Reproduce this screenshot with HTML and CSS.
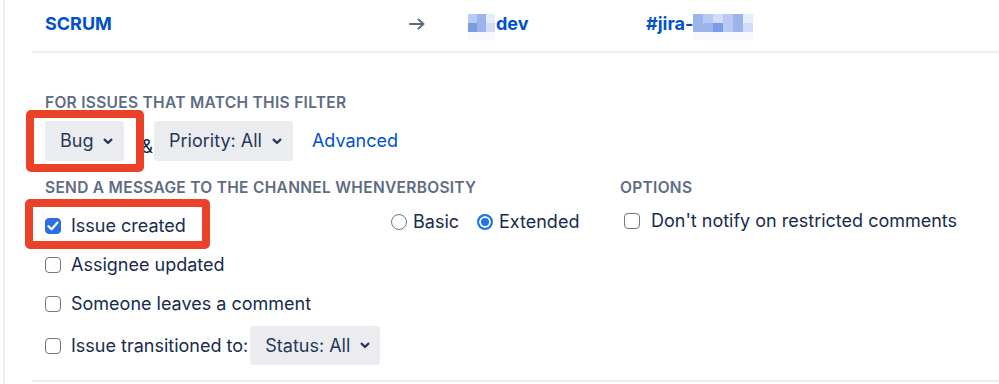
FILE: index.html
```html
<!DOCTYPE html>
<html lang="en">
<head>
<meta charset="utf-8">
<title>Jira subscription</title>
<link rel="stylesheet" href="styles.css">
</head>
<body>
<div class="page">
  <div class="inner">
    <div class="toprow">
      <a class="proj">SCRUM</a>
      <span class="arrow"><svg width="16" height="12" viewBox="0 0 16 12"><path d="M1 6H14.5M9.5 1.5L14.5 6L9.5 10.5" fill="none" stroke="currentColor" stroke-width="2" stroke-linecap="round" stroke-linejoin="round"/></svg></span>
      <span class="target">
        <span class="blur blur-dev">
          <i class="a3"></i><i class="a4"></i><i class="a1"></i>
          <i class="a5"></i><i class="a4"></i><i class="a2"></i>
          <i class="a0"></i><i class="a0"></i><i class="a0"></i>
        </span>
        <span class="lnk">dev</span>
      </span>
      <span class="target">
        <span class="lnk">#jira-</span>
        <span class="blur blur-jira">
          <i class="a4"></i><i class="a3"></i><i class="a2"></i><i class="a3"></i><i class="a4"></i><i class="a1"></i>
          <i class="a4"></i><i class="a4"></i><i class="a5"></i><i class="a3"></i><i class="a4"></i><i class="a2"></i>
          <i class="a0"></i><i class="a0"></i><i class="a0"></i><i class="a0"></i><i class="a0"></i><i class="a0"></i>
        </span>
      </span>
    </div>

    <div class="section">
      <div class="label">FOR ISSUES THAT MATCH THIS FILTER</div>
      <div class="filters">
        <button class="dd">Bug <svg class="chev" width="10" height="7" viewBox="0 0 10 7"><path d="M1.6 1.6L5 5L8.4 1.6" fill="none" stroke="currentColor" stroke-width="2.2" stroke-linecap="round" stroke-linejoin="round"/></svg></button>
        <span class="amp">&amp;</span>
        <button class="dd">Priority: All <svg class="chev" width="10" height="7" viewBox="0 0 10 7"><path d="M1.6 1.6L5 5L8.4 1.6" fill="none" stroke="currentColor" stroke-width="2.2" stroke-linecap="round" stroke-linejoin="round"/></svg></button>
        <a class="adv">Advanced</a>
      </div>

      <div class="grid">
        <div class="label span2">SEND A MESSAGE TO THE CHANNEL WHEN<span>VERBOSITY</span></div>
        <div class="label">OPTIONS</div>

        <div class="events">
          <label class="ev"><span class="cb on"><svg width="12" height="10" viewBox="0 0 12 10"><path d="M1.5 5.2L4.6 8.2L10.5 1.6" fill="none" stroke="#fff" stroke-width="2.2" stroke-linecap="round" stroke-linejoin="round"/></svg></span>Issue created</label>
          <label class="ev"><span class="cb"></span>Assignee updated</label>
          <label class="ev"><span class="cb"></span>Someone leaves a comment</label>
          <label class="ev ev-last"><span class="cb"></span>Issue transitioned to:<button class="dd status">Status: All <svg class="chev" width="10" height="7" viewBox="0 0 10 7"><path d="M1.6 1.6L5 5L8.4 1.6" fill="none" stroke="currentColor" stroke-width="2.2" stroke-linecap="round" stroke-linejoin="round"/></svg></button></label>
        </div>

        <div class="radios">
          <label class="rl"><span class="rd"></span>Basic</label>
          <label class="rl rl-gap"><span class="rd on"></span>Extended</label>
        </div>

        <div class="opts">
          <label class="ev-opt"><span class="cb"></span>Don't notify on restricted comments</label>
        </div>
      </div>
    </div>
  </div>

  <div class="mark mark-bug"></div>
  <div class="mark mark-issue"></div>
</div>
</body>
</html>
```

FILE: styles.css
```css
* { box-sizing: border-box; }
html, body { margin: 0; padding: 0; background: #fff; }
body {
  font-family: Inter, "Noto Sans", sans-serif;
  font-size: 18px;
  color: #172b4d;
}
.page {
  position: relative;
  margin-left: 3px;
  border-left: 2px solid #eceef2;
  min-height: 384px;
}
.inner { margin-left: 27px; }

/* top row */
.toprow {
  display: grid;
  grid-template-columns: 364px 59px 178px 1fr;
  grid-template-rows: 22px;
  align-items: start;
  padding: 13px 0 16px 13px;
  border-bottom: 2px solid #ebecf0;
}
.proj, .lnk {
  font-weight: 700;
  color: #0052cc;
  line-height: 22px;
  text-decoration: none;
}
.arrow {
  height: 22px;
  display: flex;
  align-items: center;
  color: #5e6c84;
}
.target { display: flex; align-items: flex-start; height: 22px; }
.blur { display: grid; margin-top: 1px; }
.blur i { display: block; }
.blur-dev { grid-template-columns: repeat(3, 9px); grid-template-rows: 9px 9px 8px; margin-right: 1px; }
.blur-jira { grid-template-columns: repeat(6, 10px); grid-template-rows: 9px 9px 8px; }
.a0 { background: rgba(47, 99, 214, 0.04); }
.a1 { background: rgba(47, 99, 214, 0.12); }
.a2 { background: rgba(47, 99, 214, 0.22); }
.a3 { background: rgba(47, 99, 214, 0.34); }
.a4 { background: rgba(47, 99, 214, 0.48); }
.a5 { background: rgba(47, 99, 214, 0.64); }

/* section */
.section {
  padding: 41px 0 15px 13px;
  border-bottom: 2px solid #ebecf0;
}
.label {
  font-size: 15.5px;
  font-weight: 600;
  letter-spacing: 0.3px;
  line-height: 18px;
  color: #5e6c84;
}
.filters {
  display: flex;
  align-items: center;
  margin-top: 9px;
  height: 40px;
}
.dd {
  appearance: none;
  border: 0;
  background: #ebecf0;
  border-radius: 3px;
  height: 40px;
  padding: 0 11px 0 15px;
  display: inline-flex;
  align-items: center;
  gap: 10px;
  font: inherit;
  color: #253858;
  line-height: 22px;
}
.chev { display: block; }
.amp {
  align-self: flex-end;
  margin: 0 1px 3px 17px;
  line-height: 22px;
}
.adv {
  margin-left: 19px;
  color: #0052cc;
  text-decoration: none;
  line-height: 22px;
}

.grid {
  display: grid;
  grid-template-columns: 341px 234px 1fr;
  align-items: start;
  margin-top: 18px;
}
.span2 { grid-column: span 2; }

.events {
  margin-top: 9px;
  display: flex;
  flex-direction: column;
}
.ev {
  display: flex;
  align-items: center;
  height: 39px;
  line-height: 22px;
}
.ev-last { margin-top: 3px; }
.cb {
  flex: none;
  width: 16px;
  height: 16px;
  border: 1px solid #767676;
  border-radius: 4px;
  background: #fff;
  margin-right: 10px;
  display: flex;
  align-items: center;
  justify-content: center;
}
.cb.on { background: #2b6fe5; border-color: #2b6fe5; }
.status { height: 39px; margin-left: 2px; padding-right: 10px; }

.radios {
  margin-top: 5px;
  height: 39px;
  display: flex;
  align-items: center;
  padding-left: 5px;
  line-height: 22px;
}
.rl { display: flex; align-items: center; }
.rl-gap { margin-left: 18px; }
.rd {
  flex: none;
  width: 16px;
  height: 16px;
  border-radius: 50%;
  border: 1px solid #767676;
  background: #fff;
  margin-right: 6px;
}
.rd.on {
  border: 2px solid #1f72f0;
  background: #1f72f0;
  box-shadow: inset 0 0 0 2px #fff;
}

.opts {
  margin-top: 4px;
  height: 39px;
  display: flex;
  align-items: center;
  padding-left: 4px;
  line-height: 22px;
}
.ev-opt { display: flex; align-items: center; }
.ev-opt .cb { margin-right: 11px; }

/* annotation overlays */
.mark {
  position: absolute;
  border: 8px solid #eb4128;
  border-radius: 5px;
  pointer-events: none;
}
.mark-bug { left: 21px; top: 110px; width: 118px; height: 62px; }
.mark-issue { left: 20px; top: 199px; width: 185px; height: 50px; }
```
